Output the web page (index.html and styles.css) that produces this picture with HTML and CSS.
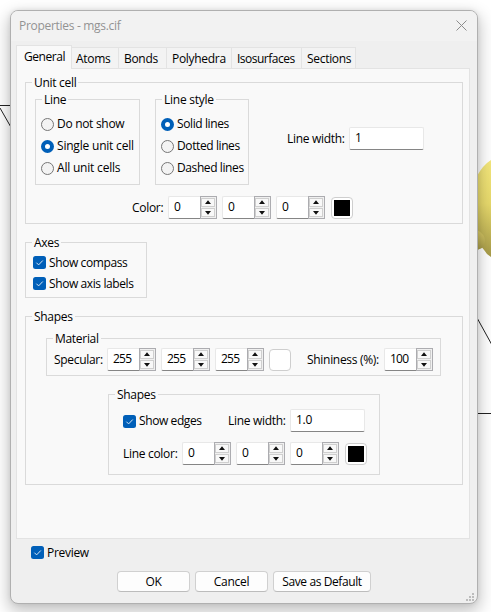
FILE: index.html
```html
<!DOCTYPE html>
<html lang="en">
<head>
<meta charset="utf-8">
<title>Properties - mgs.cif</title>
<link rel="stylesheet" href="styles.css">
</head>
<body>
<svg width="0" height="0" class="defs">
  <symbol id="spin" viewBox="0 0 17 23">
    <rect x=".5" y=".5" width="16" height="22" fill="#f0f0f0" stroke="#acacb0"/>
    <rect x="1.5" y="2.5" width="13" height="8" fill="#f8f8f8" stroke="#cfcfcf"/>
    <rect x="1.5" y="12.5" width="13" height="8" fill="#f8f8f8" stroke="#cfcfcf"/>
    <path d="M8 4.2 11 8H5zM5 15h6l-3 3.8z" fill="#111"/>
  </symbol>
  <symbol id="check" viewBox="0 0 13 13">
    <rect width="13" height="13" rx="2.5" fill="#005fb8"/>
    <path d="M3.4 6.7 5.6 8.9 9.8 4.5" fill="none" stroke="#d5e5f4" stroke-width="1"/>
  </symbol>
</svg>
<svg class="scene" width="491" height="612" viewBox="0 0 491 612">
  <defs>
    <linearGradient id="ball" x1="0" y1="0" x2="0" y2="1">
      <stop offset="0" stop-color="#f5e87c"/><stop offset=".45" stop-color="#e8da6c"/><stop offset="1" stop-color="#a69a48"/>
    </linearGradient>
    <linearGradient id="lump" x1="0" y1="0" x2="0" y2="1">
      <stop offset="0" stop-color="#dccd68"/><stop offset="1" stop-color="#a89c4a"/>
    </linearGradient>
  </defs>
  <path d="M0 105.500H11M0 108l12 21M476 316l16 29M476 413.500h15" fill="none" stroke="#222"/>
  <path d="M491 160Q483 165 477 176V250L482 247.500Q485 251 487 254L491 257z" fill="url(#ball)"/>
  <path d="M477 230Q485 234 485 241 485 246 482 248L477 250z" fill="url(#lump)"/>
</svg>
<main class="dialog">
  <header class="titlebar"><span class="t-title">Properties - mgs.cif</span>
    <svg width="11" height="11" viewBox="0 0 11 11"><path d="M.5.500l10 10M10.500.500l-10 10" stroke="#8c8c8c" fill="none"/></svg>
  </header>
  <nav class="tabs">
    <div class="tab active"><span>General</span></div>
    <div class="tab atoms"><span>Atoms</span></div>
    <div class="tab bonds"><span>Bonds</span></div>
    <div class="tab poly"><span>Polyhedra</span></div>
    <div class="tab iso"><span>Isosurfaces</span></div>
    <div class="tab sect"><span>Sections</span></div>
  </nav>
  <section class="panel">
    <div class="group unit"><span class="legend">Unit cell</span>
      <div class="unit-top">
        <div class="group line"><span class="legend">Line</span>
          <div class="option"><i class="radio"></i>Do not show</div>
          <div class="option single"><i class="radio on"></i>Single unit cell</div>
          <div class="option single"><i class="radio"></i>All unit cells</div>
        </div>
        <div class="group style"><span class="legend">Line style</span>
          <div class="option"><i class="radio on"></i>Solid lines</div>
          <div class="option"><i class="radio"></i>Dotted lines</div>
          <div class="option"><i class="radio"></i>Dashed lines</div>
        </div>
        <div class="row width-row"><span class="label w-width">Line width:</span><div class="field">1</div></div>
      </div>
      <div class="row color-row"><span class="label w-color">Color:</span>
        <div class="spin"><span>0</span><svg><use href="#spin"/></svg></div>
        <div class="spin"><span>0</span><svg><use href="#spin"/></svg></div>
        <div class="spin"><span>0</span><svg><use href="#spin"/></svg></div>
        <div class="swatch black"></div>
      </div>
    </div>
    <div class="group axes"><span class="legend">Axes</span>
      <div class="check"><svg><use href="#check"/></svg>Show compass</div>
      <div class="check"><svg><use href="#check"/></svg>Show axis labels</div>
    </div>
    <div class="group shapes"><span class="legend">Shapes</span>
      <div class="group material"><span class="legend">Material</span>
        <div class="row"><span class="label w-spec">Specular:</span>
          <div class="spin"><span>255</span><svg><use href="#spin"/></svg></div>
          <div class="spin"><span>255</span><svg><use href="#spin"/></svg></div>
          <div class="spin"><span>255</span><svg><use href="#spin"/></svg></div>
          <div class="swatch plain"></div>
          <span class="label w-shin">Shininess (%):</span>
          <div class="spin"><span>100</span><svg><use href="#spin"/></svg></div>
        </div>
      </div>
      <div class="group edges"><span class="legend">Shapes</span>
        <div class="row"><div class="check"><svg><use href="#check"/></svg>Show edges</div><span class="label w-width">Line width:</span><div class="field">1.0</div></div>
        <div class="row edge-colors"><span class="label w-lcolor">Line color:</span>
          <div class="spin"><span>0</span><svg><use href="#spin"/></svg></div>
          <div class="spin"><span>0</span><svg><use href="#spin"/></svg></div>
          <div class="spin"><span>0</span><svg><use href="#spin"/></svg></div>
          <div class="swatch black"></div>
        </div>
      </div>
    </div>
  </section>
  <div class="check preview"><svg><use href="#check"/></svg>Preview</div>
  <footer class="buttons">
    <div class="button">OK</div><div class="button">Cancel</div><div class="button wide">Save as Default</div>
  </footer>
  <svg class="grip" width="8" height="8" viewBox="0 0 8 8"><path d="M6 0h2v2H6zM3 3h2v2H3zM6 3h2v2H6zM0 6h2v2H0zM3 6h2v2H3zM6 6h2v2H6z" fill="#bcbcbc"/></svg>
</main>
</body>
</html>
```
FILE: styles.css
```css
* { box-sizing: border-box; }
body { margin: 0; width: 491px; height: 612px; overflow: hidden; background: #fff; padding: 10px;
  font: 12px/16px "Open Sans", "Noto Sans", sans-serif; letter-spacing: -0.3px; color: #000; }
.defs, .scene { position: absolute; left: 0; top: 0; }
svg { display: block; flex: none; }
.dialog { position: relative; width: 468px; height: 594px; border: 1px solid #b0b0b0; border-radius: 8px;
  background: #efefef; box-shadow: 0 6px 16px 2px rgba(0,0,0,.23), 0 0 5px rgba(0,0,0,.08); }
.titlebar { height: 30px; display: flex; justify-content: space-between; padding: 7px 10px 0 8px;
  background: #f2f2f2; border-radius: 7px 7px 0 0; color: #929292; }
.titlebar svg { margin-top: 2px; }
.tabs { display: flex; align-items: flex-end; height: 27px; margin-left: 5px; white-space: nowrap; }
.tab { height: 21px; border: 1px solid #e3e3e3; border-left: 0; border-bottom: 0; background: #f3f3f3; padding: 3px 0 0 4px; width: 47px; }
.tab.active { width: 56px; height: 24px; background: #f9f9f9; border-left: 1px solid #e3e3e3; margin-bottom: -1px; padding: 3px 0 0 7px; z-index: 1; letter-spacing: -.45px; }
.tab.bonds { width: 48px; padding-left: 5px; }
.tab.poly { width: 65px; padding-left: 5px; }
.tab.iso { width: 70px; padding-left: 5px; letter-spacing: -.5px; }
.tab.sect { width: 54px; padding-left: 5px; }
.panel { width: 454px; height: 471px; margin-left: 5px; border: 1px solid #e3e3e3; background: #f9f9f9; padding: 13px 0 0 8px; }
.group { position: relative; border: 1px solid #dadada; white-space: nowrap; }
.legend { position: absolute; left: 6px; top: -8px; padding: 0 2px; background: #f9f9f9; }
.unit { width: 438px; height: 142px; padding: 16px 0 0 9px; }
.unit-top { display: flex; }
.line { width: 105px; height: 86px; padding: 13px 0 0 5px; }
.style { width: 94px; height: 86px; margin-left: 15px; padding: 13px 0 0 5px; letter-spacing: -.4px; }
.style .legend { letter-spacing: -.25px; }
.option { display: flex; align-items: center; height: 22px; gap: 3px; }
.option.single { letter-spacing: -.2px; }
.radio { width: 13px; height: 13px; border: 1px solid #767676; border-radius: 50%; background: #f3f3f3; }
.radio.on { border: 4px solid #005fb8; background: #fff; }
.row { display: flex; align-items: center; }
.width-row { margin: 28px 0 0 38px; height: 23px; }
.w-width { width: 62px; }
.field { width: 75px; height: 23px; background: #fff; border: 1px solid #e8e8e8; border-bottom-color: #858585; border-radius: 2px; padding: 2px 5px; }
.color-row { margin: 11px 0 0 97px; }
.w-color { width: 36px; }
.spin { width: 49px; height: 23px; display: flex; margin-right: 5px; }
.spin span { width: 32px; background: #fff; border: 1px solid #e8e8e8; border-right: 0; border-bottom-color: #858585; border-radius: 2px 0 0 2px; padding: 2px 0 0 5px; letter-spacing: -.75px; }
.spin svg { width: 17px; height: 23px; }
.swatch { width: 22px; height: 22px; margin: 1px 0 0 1px; border: 1px solid #cecece; border-radius: 4px; background: #fff; padding: 2px; }
.swatch.plain { margin-left: 0; }
.black::before { content: ""; display: block; width: 16px; height: 16px; background: #000; }
.axes { width: 122px; height: 56px; margin-top: 18px; padding: 9px 0 0 7px; }
.check { display: flex; align-items: center; height: 21px; gap: 3px; }
.axes .check { letter-spacing: -.4px; }
.check svg { width: 13px; height: 13px; }
.shapes { width: 438px; height: 169px; margin-top: 18px; padding: 21px 0 0 20px; }
.material { width: 395px; height: 38px; padding: 9px 0 0 7px; }
.w-spec { width: 53px; }
.w-shin { margin-left: 16px; width: 77px; }
.edges { width: 272px; height: 81px; margin: 18px 0 0 62px; padding: 14px 0 0 14px; }
.edges .check { width: 105px; padding-top: 1px; letter-spacing: -.4px; }
.edges .w-width { width: 62px; }
.edge-colors { margin-top: 10px; }
.w-lcolor { width: 59px; }
.preview { margin: 3px 0 0 20px; }
.buttons { display: flex; gap: 5px; margin: 8px 0 0 106px; }
.button { width: 73px; height: 21px; border: 1px solid #d0d0d0; border-bottom-color: #bcbcbc; border-radius: 4px; background: #fdfdfd; text-align: center; line-height: 20px; white-space: nowrap; }
.button.wide { width: 98px; letter-spacing: -.4px; }
.grip { position: absolute; right: 3px; bottom: 2px; }
```
